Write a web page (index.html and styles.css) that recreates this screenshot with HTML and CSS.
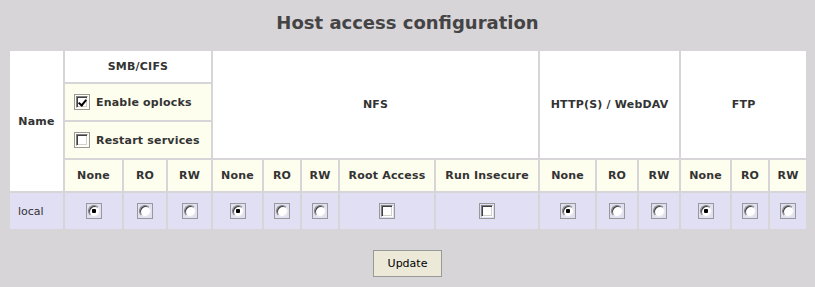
FILE: index.html
```html
<!DOCTYPE html>
<html lang="en">
<head>
  <meta charset="UTF-8" />
  <title>Host access configuration</title>
  <link rel="stylesheet" href="styles.css">
</head>
<body>
  <h2 class="title">Host access configuration</h2>
  <form id="access-form">
    <table class="access">
      <colgroup>
        <col class="c53"><col class="c57"><col class="c42"><col class="c43">
        <col class="c49"><col class="c36"><col class="c36"><col class="c94"><col class="c102">
        <col class="c55"><col class="c40"><col class="c40">
        <col class="c49"><col class="c36"><col class="c36">
      </colgroup>
      <tr class="group-row">
        <th rowspan="4">Name</th>
        <th colspan="3">SMB/CIFS</th>
        <th colspan="5" rowspan="3">NFS</th>
        <th colspan="3" rowspan="3">HTTP(S) / WebDAV</th>
        <th colspan="3" rowspan="3">FTP</th>
      </tr>
      <tr class="opt-row">
        <td colspan="3">
          <label class="opt"><span class="box"><input type="checkbox" name="oplocks" checked></span>Enable oplocks</label>
        </td>
      </tr>
      <tr class="opt-row">
        <td colspan="3">
          <label class="opt"><span class="box"><input type="checkbox" name="restart"></span>Restart services</label>
        </td>
      </tr>
      <tr class="sub-row">
        <th>None</th><th>RO</th><th>RW</th>
        <th>None</th><th>RO</th><th>RW</th><th>Root Access</th><th>Run Insecure</th>
        <th>None</th><th>RO</th><th>RW</th>
        <th>None</th><th>RO</th><th>RW</th>
      </tr>
      <tr class="host-row">
        <td class="host">local</td>
        <td><span class="box"><input type="radio" name="smb" checked></span></td>
        <td><span class="box"><input type="radio" name="smb"></span></td>
        <td><span class="box"><input type="radio" name="smb"></span></td>
        <td><span class="box"><input type="radio" name="nfs" checked></span></td>
        <td><span class="box"><input type="radio" name="nfs"></span></td>
        <td><span class="box"><input type="radio" name="nfs"></span></td>
        <td><span class="box"><input type="checkbox" name="root"></span></td>
        <td><span class="box"><input type="checkbox" name="insecure"></span></td>
        <td><span class="box"><input type="radio" name="http" checked></span></td>
        <td><span class="box"><input type="radio" name="http"></span></td>
        <td><span class="box"><input type="radio" name="http"></span></td>
        <td><span class="box"><input type="radio" name="ftp" checked></span></td>
        <td><span class="box"><input type="radio" name="ftp"></span></td>
        <td><span class="box"><input type="radio" name="ftp"></span></td>
      </tr>
    </table>
    <div class="actions">
      <button type="submit" class="btn-update">Update</button>
    </div>
  </form>
</body>
</html>
```

FILE: styles.css
```css
body {
  margin: 0;
  padding: 8px;
  background: #d8d5d9;
  font-family: "DejaVu Sans", Verdana, sans-serif;
  color: #333;
}
.title {
  margin: 4px 0 16px;
  font-size: 18px;
  line-height: 21px;
  text-align: center;
  color: #444;
}
.access {
  width: 100%;
  table-layout: fixed;
  border-spacing: 2px;
  font-size: 11px;
}
.c53 { width: 53px; }
.c57 { width: 57px; }
.c42 { width: 42px; }
.c43 { width: 43px; }
.c49 { width: 49px; }
.c36 { width: 36px; }
.c94 { width: 94px; }
.c102 { width: 102px; }
.c55 { width: 55px; }
.c40 { width: 40px; }
th, td {
  padding: 0;
  text-align: center;
  vertical-align: middle;
}
th {
  font-weight: bold;
  white-space: nowrap;
  letter-spacing: 0.2px;
}
.group-row th {
  background: #fff;
  height: 31px;
}
.opt-row td {
  background: #fefeee;
  height: 36px;
  text-align: left;
}
.sub-row th {
  background: #fefeee;
  height: 31px;
}
.host-row td {
  background: #e1dff4;
  height: 36px;
}
td.host {
  text-align: left;
  padding-left: 8px;
}
.opt {
  display: flex;
  align-items: center;
  gap: 6px;
  padding-left: 9px;
  font-weight: bold;
  letter-spacing: 0.2px;
  cursor: pointer;
}
.box {
  display: inline-flex;
  align-items: center;
  justify-content: center;
  width: 16px;
  height: 16px;
  border: 1px solid #999;
  box-sizing: border-box;
  vertical-align: middle;
}
.box input {
  appearance: none;
  -webkit-appearance: none;
  margin: 0;
  width: 12px;
  height: 12px;
  background: #fff;
  box-sizing: border-box;
  position: relative;
}
.box input[type="checkbox"] {
  border: 1px solid;
  border-color: #808080 #fff #fff #808080;
  box-shadow: inset 1px 1px 0 #404040, inset -1px -1px 0 #d4d0c8;
}
.box input[type="checkbox"]:checked::after {
  content: "";
  position: absolute;
  left: 3px;
  top: 1px;
  width: 3px;
  height: 6px;
  border: solid #000;
  border-width: 0 2px 2px 0;
  transform: rotate(40deg);
}
.box input[type="radio"] {
  border-radius: 50%;
  border: 1px solid;
  border-color: #808080 #e8e8e8 #e8e8e8 #808080;
  box-shadow: inset 1px 1px 0 #404040;
}
.box input[type="radio"]:checked {
  background: radial-gradient(circle, #000 0 2px, #fff 2.5px);
}
.actions {
  margin-top: 19px;
  text-align: center;
}
.btn-update {
  height: 27px;
  padding: 0 14px;
  background: #ece9d8;
  border: 1px solid #999;
  font-family: "DejaVu Sans", Verdana, sans-serif;
  font-size: 11px;
  color: #000;
  cursor: pointer;
}
```
